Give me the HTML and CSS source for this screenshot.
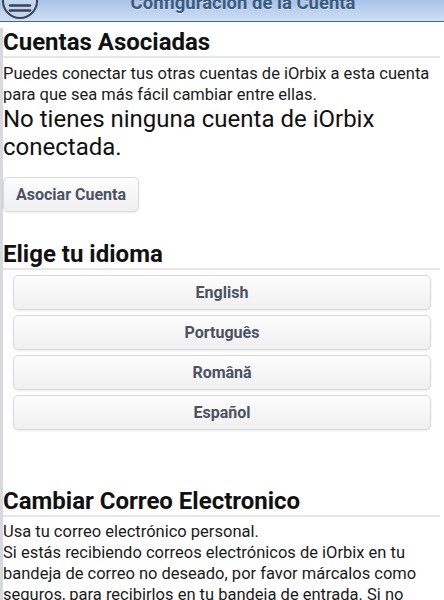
FILE: index.html
```html
<!DOCTYPE html>
<html lang="es">
<head>
<meta charset="utf-8">
<title>Configuración de la Cuenta</title>
<link rel="stylesheet" href="styles.css">
</head>
<body>
<header class="topbar">
  <div class="topbar-left">
    <span class="menu-btn" aria-label="Menú">
      <svg width="36" height="36" viewBox="0 0 36 36">
        <circle cx="18" cy="18" r="17" fill="#c3d6ef" stroke="#3a4456" stroke-width="2"/>
        <line x1="8" y1="22.5" x2="28" y2="22.5" stroke="#3a4456" stroke-width="2.6" stroke-linecap="round"/>
        <line x1="8" y1="27.5" x2="28" y2="27.5" stroke="#3a4456" stroke-width="2.6" stroke-linecap="round"/>
      </svg>
    </span>
  </div>
  <h1 class="topbar-title">Configuración de la Cuenta</h1>
  <div class="topbar-right"></div>
</header>

<main class="page">
  <section class="section section-accounts">
    <h2 class="section-title">Cuentas Asociadas</h2>
    <p class="text">Puedes conectar tus otras cuentas de iOrbix a esta cuenta para que sea más fácil cambiar entre ellas.</p>
    <p class="notice">No tienes ninguna cuenta de iOrbix conectada.</p>
    <button class="btn btn-inline">Asociar Cuenta</button>
  </section>

  <section class="section section-lang">
    <h2 class="section-title">Elige tu idioma</h2>
    <div class="lang-list">
      <button class="btn btn-block">English</button>
      <button class="btn btn-block">Português</button>
      <button class="btn btn-block">Română</button>
      <button class="btn btn-block">Español</button>
    </div>
  </section>

  <section class="section section-email">
    <h2 class="section-title">Cambiar Correo Electronico</h2>
    <p class="text text-tight">Usa tu correo electrónico personal.<br>Si estás recibiendo correos electrónicos de iOrbix en tu bandeja de correo no deseado, por favor márcalos como seguros, para recibirlos en tu bandeja de entrada. Si no encuentras nuestros correos, revisa tu carpeta de spam.</p>
  </section>
</main>
</body>
</html>
```
FILE: styles.css
```css
html {
  overflow: hidden;
}

body {
  margin: 0;
  background: #ffffff;
  font-family: Roboto, "Liberation Sans", Arial, sans-serif;
  color: #111111;
}

.topbar {
  display: grid;
  grid-template-columns: 1fr auto 1fr;
  align-items: center;
  height: 44px;
  box-sizing: border-box;
  padding: 6px 0 0 2px;
  margin-top: -22px;
  background: linear-gradient(to bottom, #8fb2df 0%, #a6c2e7 50%, #cfe0f5 100%);
  border-bottom: 1px solid #4a6486;
}

.topbar-left {
  display: flex;
  align-items: center;
}

.menu-btn {
  display: block;
  width: 36px;
  height: 36px;
  margin-top: -3px;
}

.menu-btn svg {
  display: block;
}

.topbar-title {
  margin: 0 0 0 40px;
  font-size: 18.5px;
  font-weight: 700;
  line-height: 22px;
  color: #3b5a80;
  text-shadow: 0 1px 0 rgba(255, 255, 255, 0.45);
  white-space: nowrap;
}

.page {
  border-left: 3px solid #d6d9de;
  padding: 0 4px 0 0;
  min-height: 700px;
}

.section-title {
  margin: 0;
  font-size: 24px;
  font-weight: 700;
  line-height: 28px;
  color: #111111;
  border-bottom: 2px solid #e6e6e6;
}

.section-accounts .section-title {
  margin-top: 6px;
}

.section-lang .section-title {
  margin-top: 28px;
}

.section-email .section-title {
  margin-top: 57px;
}

.text {
  margin: 5px 0 0;
  font-size: 16.5px;
  line-height: 21px;
  color: #1a1a1a;
}

.text-tight {
  margin-top: 4px;
}

.notice {
  margin: 0;
  font-size: 24px;
  line-height: 28px;
  color: #111111;
}

.btn {
  font-family: Roboto, "Liberation Sans", Arial, sans-serif;
  font-size: 16px;
  font-weight: 700;
  line-height: 19px;
  color: #4a5264;
  background: linear-gradient(to bottom, #fdfdfd 0%, #f0f0f1 100%);
  border: 1px solid #d9d9db;
  border-radius: 5px;
  box-shadow: 0 1px 2px rgba(0, 0, 0, 0.08);
  padding: 7px 12px;
  cursor: pointer;
}

.btn-inline {
  display: inline-block;
  margin-top: 16px;
}

.lang-list {
  display: flex;
  flex-direction: column;
  gap: 5px;
  margin: 5px 9px 0 10px;
}

.btn-block {
  display: block;
  width: 100%;
  height: 35px;
  text-align: center;
}
```
